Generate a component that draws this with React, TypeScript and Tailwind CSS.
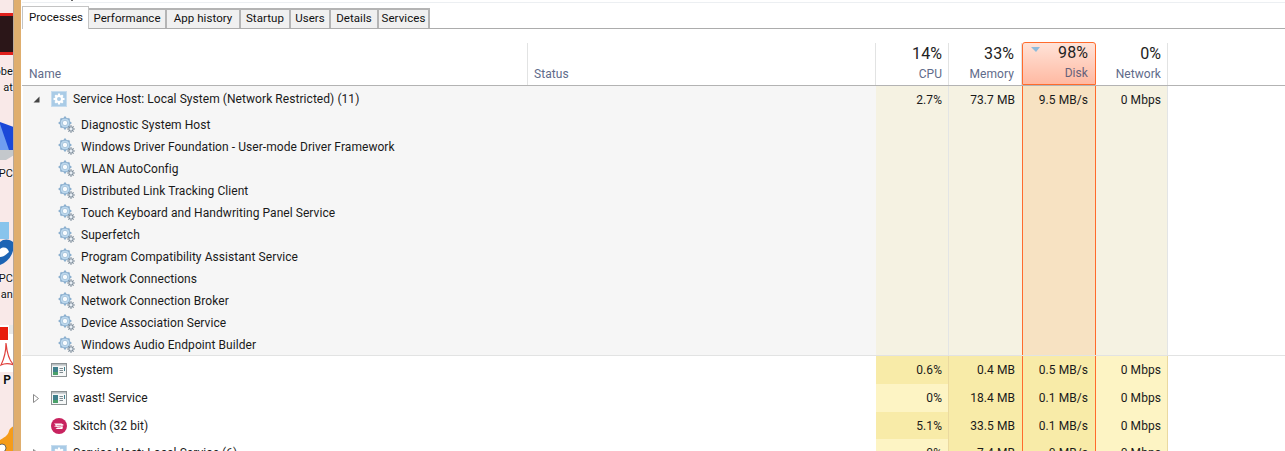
import React from "react";

const font = { fontFamily: 'Roboto,"Open Sans",sans-serif' };

function GroupIcon() {
  return (
    <svg width="16" height="16" viewBox="0 0 16 16" className="shrink-0">
      <rect x="0" y="0" width="16" height="16" fill="#a9cbe6" />
      <rect x="0.5" y="0.5" width="15" height="15" fill="none" stroke="#c6dcee" />
      <g stroke="#fff" strokeWidth="2.2">
        <line x1="8" y1="2.5" x2="8" y2="13.5" />
        <line x1="2.5" y1="8" x2="13.5" y2="8" />
        <line x1="4.2" y1="4.2" x2="11.8" y2="11.8" />
        <line x1="11.8" y1="4.2" x2="4.2" y2="11.8" />
      </g>
      <circle cx="8" cy="8" r="4" fill="#fff" />
      <circle cx="8" cy="8" r="2" fill="#a9cbe6" />
    </svg>
  );
}

function GearIcon() {
  return (
    <svg width="17" height="17" viewBox="0 0 17 17" className="shrink-0">
      <g stroke="#8fb3d2" strokeWidth="2">
        <line x1="7" y1="0.6" x2="7" y2="13.4" />
        <line x1="0.6" y1="7" x2="13.4" y2="7" />
        <line x1="2.5" y1="2.5" x2="11.5" y2="11.5" />
        <line x1="11.5" y1="2.5" x2="2.5" y2="11.5" />
      </g>
      <circle cx="7" cy="7" r="5" fill="#bcd8ee" stroke="#84a9c9" strokeWidth="1" />
      <circle cx="7" cy="7" r="2.7" fill="#f7fbfe" stroke="#9dbdd6" strokeWidth="0.8" />
      <g stroke="#7d8d9b" strokeWidth="1.3">
        <line x1="13" y1="9.3" x2="13" y2="16.7" />
        <line x1="9.3" y1="13" x2="16.7" y2="13" />
        <line x1="10.4" y1="10.4" x2="15.6" y2="15.6" />
        <line x1="15.6" y1="10.4" x2="10.4" y2="15.6" />
      </g>
      <circle cx="13" cy="13" r="1.4" fill="#e8eff5" />
    </svg>
  );
}

function AppIcon() {
  return (
    <svg width="16" height="14" viewBox="0 0 16 14" className="shrink-0">
      <rect x="0.5" y="0.5" width="15" height="13" fill="#f5f7f7" stroke="#8b9193" />
      <rect x="1" y="1" width="14" height="1.6" fill="#b9bfc2" />
      <rect x="2" y="4" width="5" height="5" fill="#3f7f8c" />
      <rect x="2" y="9" width="5" height="3" fill="#4aa06a" />
      <g stroke="#7f8a90" strokeWidth="1">
        <line x1="8.5" y1="5.5" x2="12" y2="5.5" />
        <line x1="8.5" y1="7.5" x2="12" y2="7.5" />
        <line x1="8.5" y1="9.5" x2="12" y2="9.5" />
      </g>
      <line x1="13.5" y1="4" x2="13.5" y2="8" stroke="#3f7f8c" />
    </svg>
  );
}

function SkitchIcon() {
  return (
    <svg width="16" height="16" viewBox="0 0 16 16" className="shrink-0">
      <circle cx="8" cy="8" r="8" fill="#c8235f" />
      <path d="M3 5.5h7.5l2.5 1.6-2.2 1H6.5l5.5.5-.6 2.4H4.5l2.4-1.7-3.9-1.1 2-1z" fill="#fff" />
      <path d="M5.5 7.4h5M5.5 9.3h4" stroke="#d8517f" strokeWidth="0.7" />
    </svg>
  );
}

function Tab({ label, active, w }: { label: string; active?: boolean; w: string }) {
  return active ? (
    <div className={`${w} h-[23px] -mb-px bg-white border-t border-x border-[#c4c4c4] flex items-start justify-center pt-[2px] pl-[1px] text-[11.5px] text-[#111] relative z-10`}>
      {label}
    </div>
  ) : (
    <div className={`${w} h-[20px] bg-[#f0f0f0] border-2 border-l-0 border-b-0 border-[#b4b4b4] flex items-center justify-center text-[11.5px] text-[#111]`}>
      {label}
    </div>
  );
}

function HeadCell({ pct, label, w, hot, pr = "pr-[6px]" }: { pct: string; label: string; w: string; hot?: boolean; pr?: string }) {
  return (
    <div
      className={`${w} ${pr} shrink-0 flex flex-col items-end relative self-end ${
        hot
          ? "bg-gradient-to-b from-[#ffe3d8] to-[#ffb9a2] border border-[#ff6b2c] rounded-t-[3px] h-[43px]"
          : "border-r border-[#e2e3e3] h-[42px]"
      }`}
    >
      {hot && (
        <svg width="9" height="5" viewBox="0 0 9 5" className="absolute left-[8px] top-[4px]">
          <path d="M0 0h9L5 5z" fill="#8dbbdc" />
        </svg>
      )}
      <div className={`text-[16px] leading-[20px] text-[#222] ${hot ? "mt-[0px]" : "mt-[1px]"}`}>{pct}</div>
      <div className={`text-[12px] leading-[18px] mt-[1px] ${hot ? "text-[#66617a]" : "text-[#5f6b8a]"}`}>{label}</div>
    </div>
  );
}

const W = { cpu: "w-[73px]", mem: "w-[73px]", disk: "w-[74px]", net: "w-[72px]" };

function Cell({ v, w, bg, extra = "" }: { v: string; w: string; bg: string; extra?: string }) {
  return (
    <div className={`${w} ${bg} ${extra} shrink-0 h-full flex justify-end text-[12px] text-[#1a1a1a]`}>
      {v}
    </div>
  );
}

const children = [
  "Diagnostic System Host",
  "Windows Driver Foundation - User-mode Driver Framework",
  "WLAN AutoConfig",
  "Distributed Link Tracking Client",
  "Touch Keyboard and Handwriting Panel Service",
  "Superfetch",
  "Program Compatibility Assistant Service",
  "Network Connections",
  "Network Connection Broker",
  "Device Association Service",
  "Windows Audio Endpoint Builder",
];

const rows = [
  { name: "System", icon: <AppIcon />, v: ["0.6%", "0.4 MB", "0.5 MB/s", "0 Mbps"], dark: true, h: "h-[28px]" },
  { name: "avast! Service", icon: <AppIcon />, arrow: true, v: ["0%", "18.4 MB", "0.1 MB/s", "0 Mbps"], dark: false, h: "h-[28px]" },
  { name: "Skitch (32 bit)", icon: <SkitchIcon />, v: ["5.1%", "33.5 MB", "0.1 MB/s", "0 Mbps"], dark: true, h: "h-[27px]" },
  { name: "Service Host: Local Service (6)", icon: <GroupIcon />, arrow: true, v: ["0%", "7.4 MB", "0 MB/s", "0 Mbps"], dark: false, h: "h-[28px]" },
];

const halo = "[text-shadow:0_0_2px_#fff,0_0_2px_#fff]";

export default function App() {
  return (
    <div className="w-[1285px] h-[451px] overflow-hidden flex bg-white tracking-[0.06px]" style={font}>
      {/* desktop fragment */}
      <div className="w-[14px] shrink-0 h-full relative overflow-hidden bg-[#f9e9e8] border-r border-[#b8a89a]">
        <div className="absolute left-0 top-[13px] w-[14px] h-[42px] bg-[#2b1618] border-y-[3px] border-[#e0201c]" />
        <div className={`absolute right-0 top-[64px] whitespace-nowrap text-[11px] leading-[16px] text-[#111] ${halo}`}>obe</div>
        <div className={`absolute right-0 top-[80px] whitespace-nowrap text-[11px] leading-[16px] text-[#111] ${halo}`}>at</div>
        <svg width="14" height="40" viewBox="0 0 14 40" className="absolute left-0 top-[122px]">
          <path d="M0 0L14 5V28H0z" fill="#1a48d8" />
          <path d="M0 2L9 28H0z" fill="#6f9df0" />
          <path d="M0 28H14V33L6 38H0z" fill="#c4c8cc" />
        </svg>
        <div className={`absolute right-0 top-[166px] whitespace-nowrap text-[11px] leading-[16px] text-[#111] ${halo}`}>s PC</div>
        <svg width="14" height="46" viewBox="0 0 14 46" className="absolute left-0 top-[222px]">
          <rect x="0" y="0" width="9" height="17" fill="#88c4ec" />
          <path d="M0 20C4 16 11 17 14 21C14 33 8 40 0 43z" fill="#1c64b4" />
          <path d="M0 27C4 24 8 26 9 30C6 33 3 35 0 35z" fill="#fff" />
        </svg>
        <div className={`absolute right-0 top-[271px] whitespace-nowrap text-[11px] leading-[16px] text-[#111] ${halo}`}>y PC</div>
        <div className={`absolute right-0 top-[287px] whitespace-nowrap text-[11px] leading-[16px] text-[#111] ${halo}`}>an</div>
        <svg width="14" height="47" viewBox="0 0 14 47" className="absolute left-0 top-[325px]">
          <rect x="0" y="0" width="14" height="47" fill="#fff" />
          <rect x="0" y="2" width="8" height="13" fill="#e81c0c" />
          <rect x="9" y="0" width="5" height="9" fill="#e8e8e8" />
          <path d="M1 40C4 34 6 26 6 18C7 28 9 36 14 40C9 38 5 38 1 40z" fill="none" stroke="#e0403c" strokeWidth="1.2" />
        </svg>
        <div className={`absolute right-[2px] top-[372px] whitespace-nowrap text-[12px] font-bold leading-[16px] text-[#111] ${halo}`}>P</div>
        <svg width="14" height="25" viewBox="0 0 14 25" className="absolute left-0 top-[426px]">
          <path d="M14 0V25H0V14C3 12 8 10 9 5C10 2 12 1 14 0z" fill="#f59c1a" />
          <circle cx="2" cy="22" r="4" fill="#fff" stroke="#333" strokeWidth="0.7" />
        </svg>
      </div>

      {/* tan window border */}
      <div className="w-[7px] shrink-0 h-full bg-[#dfae6e]" />
      <div className="w-[1px] shrink-0 h-full bg-white" />

      {/* task manager */}
      <div className="flex-1 min-w-0 h-full flex flex-col bg-white">
        <div className="h-[3px] shrink-0 bg-white border-b border-[#eceff2] pl-[49px]">
          <div className="w-[2px] h-[1px] bg-[#666]" />
        </div>
        <div className="h-[26px] shrink-0 flex items-end border-b border-[#acacac]">
          <Tab label="Processes" active w="w-[67px]" />
          <Tab label="Performance" w="w-[78px]" />
          <Tab label="App history" w="w-[74px]" />
          <Tab label="Startup" w="w-[50px]" />
          <Tab label="Users" w="w-[40px]" />
          <Tab label="Details" w="w-[48px]" />
          <Tab label="Services" w="w-[51px]" />
        </div>

        {/* header */}
        <div className="h-[57px] shrink-0 flex border-b border-[#b3b3b3]">
          <div className="w-[506px] shrink-0 h-[42px] self-end border-r border-[#e2e3e3] flex items-end pl-[7px] pb-[2px] text-[12px] text-[#5f6b8a]">
            Name
          </div>
          <div className="w-[348px] shrink-0 h-[42px] self-end border-r border-[#e2e3e3] flex items-end pl-[6px] pb-[2px] text-[12px] text-[#5f6b8a]">
            Status
          </div>
          <HeadCell pct="14%" label="CPU" w={W.cpu} />
          <HeadCell pct="33%" label="Memory" w={W.mem} pr="pr-[7px]" />
          <HeadCell pct="98%" label="Disk" w={W.disk} hot pr="pr-[7px]" />
          <HeadCell pct="0%" label="Network" w={W.net} />
        </div>

        {/* group */}
        <div className="h-[270px] shrink-0 flex border-b border-[#e2e3e3]">
          <div className="w-[854px] shrink-0 flex flex-col border-l border-white bg-[#f6f6f6]">
            <div className="h-[27px] shrink-0 flex items-center pb-[1px] text-[12px] text-[#1a1a1a]">
              <svg width="7" height="7" viewBox="0 0 7 7" className="ml-[10px] mr-[11px] shrink-0">
                <path d="M6.5 0.5V6.5H0.5z" fill="#444" />
              </svg>
              <GroupIcon />
              <span className="ml-[6px]">Service Host: Local System (Network Restricted) (11)</span>
            </div>
            {children.map((c) => (
              <div key={c} className="h-[22px] shrink-0 flex items-center pt-[1px] text-[12px] text-[#1a1a1a] pl-[35px]">
                <GearIcon />
                <span className="ml-[6px]">{c}</span>
              </div>
            ))}
          </div>
          <Cell v="2.7%" w={W.cpu} bg="bg-[#f5f2e2]" extra="pt-[5px] pr-[6px] border-r border-[#e3e5e5]" />
          <Cell v="73.7 MB" w={W.mem} bg="bg-[#f5f2e2]" extra="pt-[5px] pr-[7px]" />
          <Cell v="9.5 MB/s" w={W.disk} bg="bg-[#f7e2c2]" extra="pt-[5px] pr-[7px] border-x border-[#ff6b2c]" />
          <Cell v="0 Mbps" w={W.net} bg="bg-[#f5f2e2]" extra="pt-[5px] pr-[6px] border-r border-[#e3e5e5]" />
        </div>

        {/* rows */}
        {rows.map((r) => (
          <div key={r.name} className={`${r.h} shrink-0 flex`}>
            <div className="w-[854px] shrink-0 flex items-center text-[12px] text-[#1a1a1a]">
              <div className="w-[29px] shrink-0 pl-[11px] flex items-center">
                {r.arrow && (
                  <svg width="6" height="9" viewBox="0 0 6 9">
                    <path d="M0.5 0.5L5.5 4.5L0.5 8.5z" fill="#fff" stroke="#8a8a8a" />
                  </svg>
                )}
              </div>
              {r.icon}
              <span className="ml-[6px]">{r.name}</span>
            </div>
            <Cell v={r.v[0]} w={W.cpu} bg={r.dark ? "bg-[#f8eba8]" : "bg-[#fdf4c4]"} extra="items-center pr-[6px] border-r border-[#ead9a0]" />
            <Cell v={r.v[1]} w={W.mem} bg="bg-[#f8eba8]" extra="items-center pr-[7px]" />
            <Cell v={r.v[2]} w={W.disk} bg="bg-[#f8eba8]" extra="items-center pr-[7px] border-x border-[#ff6b2c]" />
            <Cell v={r.v[3]} w={W.net} bg="bg-[#fdf4c4]" extra="items-center pr-[6px] border-r border-[#ead9a0]" />
          </div>
        ))}
      </div>
    </div>
  );
}
